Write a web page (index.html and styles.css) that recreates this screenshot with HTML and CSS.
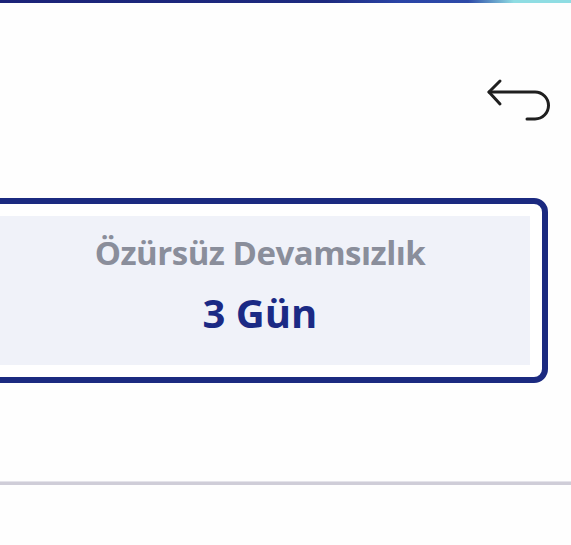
FILE: index.html
```html
<!DOCTYPE html>
<html lang="tr">
<head>
<meta charset="utf-8">
<link rel="stylesheet" href="styles.css">
</head>
<body>
<div class="topbar"></div>
<div class="header">
  <button class="back" aria-label="Geri">
    <svg width="68" height="48" viewBox="0 0 68 48" fill="none" stroke="#1f1f1f" stroke-width="3" stroke-linecap="round" stroke-linejoin="round">
      <path d="M5 16 H51 A13.5 13.5 0 0 1 51 43 H43"/>
      <path d="M16 5 L5 16 L16 28"/>
    </svg>
  </button>
</div>
<div class="card">
  <div class="panel">
    <div class="label">Özürsüz Devamsızlık</div>
    <div class="value">3 Gün</div>
  </div>
</div>
<div class="divider"></div>
</body>
</html>
```
FILE: styles.css
```css
html, body {
  margin: 0;
  padding: 0;
  background: #fefefe;
  overflow: hidden;
  font-family: "Open Sans", "Liberation Sans", sans-serif;
}
.topbar {
  height: 3px;
  background: linear-gradient(90deg, #1b2378 0%, #1d2a7f 57%, #2a44a6 70%, #2d4aa8 82%, #8fdde3 90%, #8fdde3 100%);
}
.header {
  display: flex;
  justify-content: flex-end;
  padding: 73px 19px 0 0;
  height: 122px;
}
.back {
  border: 0;
  background: none;
  padding: 0;
  width: 68px;
  height: 48px;
  display: block;
}
.back svg { display: block; }
.card {
  margin-left: -28px;
  width: 576px;
  box-sizing: border-box;
  border: 6px solid #1b2a80;
  border-radius: 14px;
  padding: 12px;
  background: #fff;
}
.panel {
  background: #f0f2f9;
  height: 149px;
  display: flex;
  flex-direction: column;
  align-items: center;
  box-sizing: border-box;
  padding-top: 17px;
}
.label {
  font-size: 33px;
  font-weight: 700;
  color: #8a8e9b;
  line-height: 40px;
  letter-spacing: -0.5px;
}
.value {
  font-size: 40px;
  font-weight: 700;
  color: #1b2a85;
  line-height: 46px;
  margin-top: 17px;
}
.divider {
  margin-top: 98px;
  height: 3px;
  background: #cfcdd8;
  border-top: 1px solid #e4e3ea;
}
```
